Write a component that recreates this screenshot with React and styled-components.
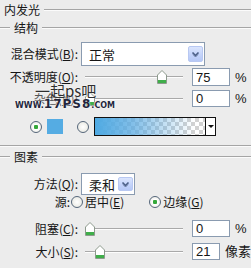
import React from 'react';
import styled, { createGlobalStyle } from 'styled-components';

const GlobalStyle = createGlobalStyle`
  html, body {
    margin: 0;
    padding: 0;
    background: #ececec;
  }
  body {
    font-family: 'Noto Sans CJK SC', 'Liberation Sans', sans-serif;
    font-size: 12px;
    color: #161616;
  }
`;

const Panel = styled.div`
  position: relative;
  width: 251px;
  height: 268px;
  overflow: hidden;
  background: #ececec;
  display: flex;
  flex-direction: column;
`;

// Group heading with an etched rule after it (and optionally a short one before)
const GroupTitle = styled.div`
  display: flex;
  align-items: center;
  height: ${p => p.h}px;
  margin-top: ${p => p.mt || 0}px;
  padding-left: ${p => p.indent || 0}px;
  line-height: 1;
  &::after {
    content: '';
    flex: 1;
    margin-left: 4px;
    border-top: 1px solid #a5a5a5;
    border-bottom: 1px solid #fbfbfb;
  }
`;

const Lead = styled.span`
  width: 10px;
  margin-right: 4px;
  border-top: 1px solid #a5a5a5;
  border-bottom: 1px solid #fbfbfb;
`;

const Rule = styled.div`
  margin-top: ${p => p.mt}px;
  border-top: 1px solid #a5a5a5;
  border-bottom: 1px solid #fbfbfb;
`;

const Row = styled.div`
  display: flex;
  align-items: center;
  height: ${p => p.h}px;
  margin-top: ${p => p.mt || 0}px;
  line-height: 1;
`;

const Label = styled.span`
  width: ${p => p.w || 78}px;
  flex-shrink: 0;
  text-align: right;
  white-space: nowrap;
  color: ${p => p.faded ? '#555' : 'inherit'};
`;

const Key = styled.span`
  text-decoration: underline;
  text-underline-offset: 1px;
`;

const Select = styled.div`
  box-sizing: border-box;
  width: ${p => p.w}px;
  height: 100%;
  margin-left: 3px;
  display: flex;
  align-items: center;
  justify-content: space-between;
  padding: 0 1px 0 7px;
  background: #fff;
  border: 1px solid #8a9bb0;
  font-size: 13px;
`;

const ArrowButton = styled.span`
  box-sizing: border-box;
  width: 15px;
  height: calc(100% - 6px);
  display: flex;
  align-items: center;
  justify-content: center;
  border-radius: 2px;
  border: 1px solid #b8c8f2;
  background: linear-gradient(180deg, #dbe5fd 0%, #c2d2fa 60%, #b6c8f6 100%);
`;

const Chevron = () => (
  <svg width="9" height="7" viewBox="0 0 9 7">
    <path d="M1.5 1.5 L4.5 4.5 L7.5 1.5" fill="none" stroke="#4b5f86" strokeWidth="1.6" />
    <path d="M2 3.5 L4.5 6 L7 3.5" fill="none" stroke="#6e80a6" strokeWidth="1" />
  </svg>
);

const SliderWrap = styled.div`
  position: relative;
  width: 98px;
  height: 14px;
  margin-left: 7px;
  flex-shrink: 0;
  &::before {
    content: '';
    position: absolute;
    left: 0;
    right: 0;
    top: 6px;
    border-top: 1px solid #a9a9a9;
    border-bottom: 1px solid #fdfdfd;
  }
`;

const ThumbSvg = styled.svg`
  position: absolute;
  top: 0;
`;

const Slider = ({ at }) => (
  <SliderWrap>
    <ThumbSvg width="10" height="14" viewBox="0 0 10 14" style={{ left: `${Math.round(at * 89)}px` }}>
      <path d="M5 0.5 L9.5 5 L9.5 13.5 L0.5 13.5 L0.5 5 Z" fill="#fff" stroke="#8d9a8d" />
      <rect x="1" y="10" width="8" height="3" fill="#3fae4a" />
    </ThumbSvg>
  </SliderWrap>
);

const NumBox = styled.div`
  box-sizing: border-box;
  width: 38px;
  height: 100%;
  margin-left: 9px;
  padding-left: 3px;
  display: flex;
  align-items: center;
  background: #fff;
  border: 1px solid #8a9bb0;
  font-family: 'Liberation Sans', sans-serif;
  font-size: 13px;
`;

const Unit = styled.span`
  margin-left: 5px;
  white-space: nowrap;
  font-family: 'Liberation Sans', 'Noto Sans CJK SC', sans-serif;
  font-size: 13px;
`;

const Radio = styled.span`
  box-sizing: border-box;
  width: 12px;
  height: 12px;
  flex-shrink: 0;
  margin-left: ${p => p.ml || 0}px;
  border-radius: 50%;
  border: 1px solid #55667a;
  background: radial-gradient(circle at 50% 50%, ${p => p.on ? '#35a83a 0 2px, #fff 2.5px' : '#fff 0'} , #e4e4dc 100%);
`;

const Swatch = styled.span`
  width: 16px;
  height: 15px;
  margin-left: 5px;
  background: #55ace3;
`;

const GradientBox = styled.div`
  box-sizing: border-box;
  width: 122px;
  height: 19px;
  margin-left: 5px;
  display: flex;
  border: 1px solid #111;
`;

const GradientFill = styled.div`
  flex: 1;
  background:
    linear-gradient(90deg, #4faae3 0%, rgba(90, 170, 225, 0.75) 35%, rgba(140, 195, 235, 0) 90%),
    repeating-conic-gradient(#d2d2d2 0 25%, #ffffff 0 50%) 0 0 / 8px 8px;
`;

const DropPart = styled.div`
  width: 9px;
  border-left: 1px solid #111;
  background: #fff;
  display: flex;
  align-items: center;
  justify-content: center;
  &::after {
    content: '';
    border-left: 3px solid transparent;
    border-right: 3px solid transparent;
    border-top: 3px solid #111;
  }
`;

const RadioText = styled.span`
  margin-left: 2px;
  white-space: nowrap;
`;

// Site watermark stamped over the noise row
const WmTitle = styled.span`
  position: absolute;
  left: 35px;
  top: 83px;
  font-size: 15px;
  line-height: 15px;
  color: #2e2e2e;
  text-shadow: 0 0 2px #fff;
  pointer-events: none;
`;

const WmUrl = styled.span`
  position: absolute;
  left: 15px;
  top: 99px;
  font-family: 'DejaVu Sans', sans-serif;
  font-weight: bold;
  font-size: 8px;
  line-height: 11px;
  color: #23263c;
  text-shadow: 0 0 1px #fff, 0 0 2px #fff;
  pointer-events: none;
  white-space: nowrap;
`;

const WmBig = styled.b`
  font-size: 12px;
  letter-spacing: 1px;
`;

export default function App() {
  return (
    <>
      <GlobalStyle />
      <Panel>
        <GroupTitle h={20} indent={4}>内发光</GroupTitle>
        <GroupTitle h={16}><Lead />结构</GroupTitle>

        <Row h={24} mt={6}>
          <Label>混合模式(<Key>B</Key>):</Label>
          <Select w={124}>正常<ArrowButton><Chevron /></ArrowButton></Select>
        </Row>

        <Row h={18} mt={2}>
          <Label>不透明度(<Key>O</Key>):</Label>
          <Slider at={0.81} />
          <NumBox>75</NumBox>
          <Unit>%</Unit>
        </Row>

        <Row h={17} mt={4}>
          <Label faded>杂色(<Key>N</Key>):</Label>
          <Slider at={0} />
          <NumBox>0</NumBox>
          <Unit>%</Unit>
        </Row>

        <Row h={19} mt={10}>
          <Radio on ml={30} />
          <Swatch />
          <Radio ml={14} />
          <GradientBox>
            <GradientFill />
            <DropPart />
          </GradientBox>
        </Row>

        <Rule mt={9} />
        <GroupTitle h={14} mt={3}><Lead />图素</GroupTitle>

        <Row h={22} mt={9}>
          <Label>方法(<Key>Q</Key>):</Label>
          <Select w={54}>柔和<ArrowButton><Chevron /></ArrowButton></Select>
        </Row>

        <Row h={13}>
          <Label w={70}>源:</Label>
          <Radio ml={1} />
          <RadioText>居中(<Key>E</Key>)</RadioText>
          <Radio on ml={25} />
          <RadioText>边缘(<Key>G</Key>)</RadioText>
        </Row>

        <Row h={17} mt={12}>
          <Label>阻塞(<Key>C</Key>):</Label>
          <Slider at={0} />
          <NumBox>0</NumBox>
          <Unit>%</Unit>
        </Row>

        <Row h={17} mt={6}>
          <Label>大小(<Key>S</Key>):</Label>
          <Slider at={0.11} />
          <NumBox>21</NumBox>
          <Unit>像素</Unit>
        </Row>

        <WmTitle>一起ps吧</WmTitle>
        <WmUrl>WWW.<WmBig>17PS8</WmBig>.COM</WmUrl>
      </Panel>
    </>
  );
}
